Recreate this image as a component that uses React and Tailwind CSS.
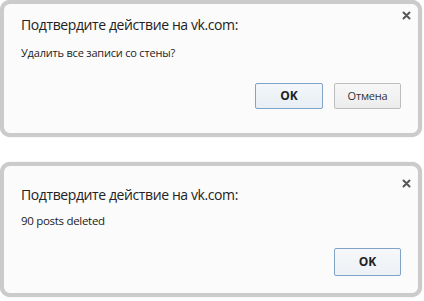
export default function App() {
  const font = { fontFamily: '"Open Sans", "Noto Sans", sans-serif' };
  const Close = () => (
    <svg width="9" height="9" viewBox="0 0 9 9" className="absolute">
      <path d="M1.5 1.5 L7.5 7.5 M7.5 1.5 L1.5 7.5" stroke="#555" strokeWidth="2" strokeLinecap="round" />
    </svg>
  );
  return (
    <div className="w-[424px] h-[301px] bg-white flex flex-col" style={font}>
      <div className="relative mr-[2px] h-[137px] rounded-[10px] border-[4px] border-[#cbcbcb] bg-[#fbfbfb] flex flex-col shadow-[0_0_1px_#bbb]">
        <div className="absolute right-[7px] top-[7px] w-[9px] h-[9px]"><Close /></div>
        <div className="pl-[17px] pt-[11px] text-[14px] text-[#222] leading-[20px] tracking-[-0.4px]">Подтвердите действие на vk.com:</div>
        <div className="pl-[17px] pt-[10px] text-[11px] text-[#222] leading-[16px] tracking-[-0.2px]">Удалить все записи со стены?</div>
        <div className="flex justify-end gap-[11px] pr-[17px] mt-[22px]">
          <button className="w-[68px] h-[26px] rounded-[2px] border border-[#7fa4c6] bg-gradient-to-b from-[#f4f7fa] to-[#e8eef4] text-[12px] font-bold text-[#222]">OK</button>
          <button className="w-[67px] h-[26px] rounded-[2px] border border-[#bdbdbd] bg-gradient-to-b from-[#f7f7f7] to-[#ececec] text-[11px] tracking-[-0.2px] text-[#333]">Отмена</button>
        </div>
      </div>
      <div className="relative mt-[25px] mr-[2px] h-[135px] rounded-[10px] border-[4px] border-[#cbcbcb] bg-[#fbfbfb] flex flex-col shadow-[0_0_1px_#bbb]">
        <div className="absolute right-[7px] top-[13px] w-[9px] h-[9px]"><Close /></div>
        <div className="pl-[17px] pt-[19px] text-[14px] text-[#222] leading-[20px] tracking-[-0.4px]">Подтвердите действие на vk.com:</div>
        <div className="pl-[17px] pt-[8px] text-[11.5px] text-[#222] leading-[16px] tracking-[-0.3px]">90 posts deleted</div>
        <div className="flex justify-end pr-[17px] mt-[19px]">
          <button className="w-[67px] h-[28px] rounded-[2px] border border-[#7fa4c6] bg-gradient-to-b from-[#f6f8fa] to-[#edf1f5] text-[12px] font-bold text-[#222]">OK</button>
        </div>
      </div>
    </div>
  );
}
